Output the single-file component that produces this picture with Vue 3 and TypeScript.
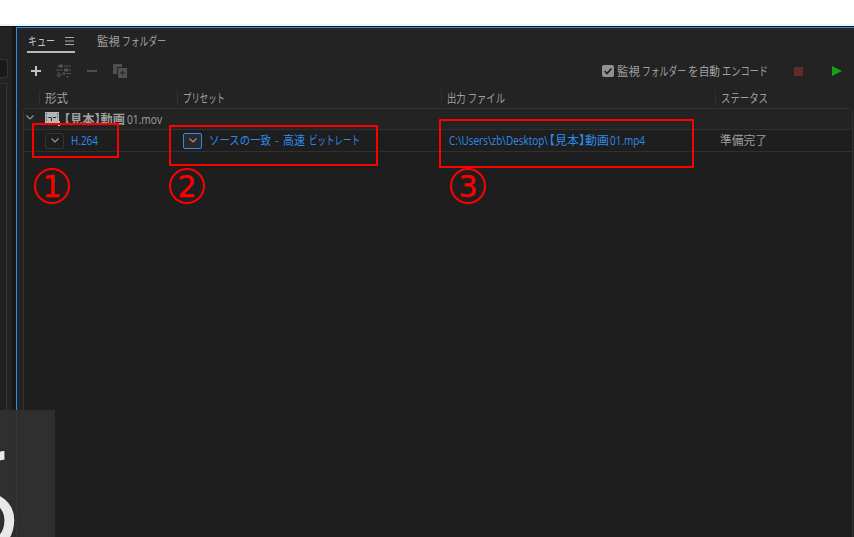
<script setup lang="ts">
import { h, type FunctionalComponent } from 'vue'

interface Column { label: string; width: number; cls: string }

// A single line of text condensed to the width of its slot.
const Fit: FunctionalComponent<{ text: string; w: number }> = (props) =>
  h('svg', { width: props.w, height: 16, viewBox: `0 0 ${props.w} 16`, overflow: 'visible' }, [
    h('text', { x: 0, y: 12.5, textLength: props.w, lengthAdjust: 'spacingAndGlyphs', fill: 'currentColor' }, props.text),
  ])
Fit.props = ['text', 'w']

const columns: Column[] = [
  { label: '形式', width: 23, cls: 'c-format' },
  { label: 'プリセット', width: 42, cls: 'c-preset' },
  { label: '出力 ファイル', width: 58, cls: 'c-output' },
  { label: 'ステータス', width: 47, cls: 'c-status' },
]

const boxes: string[] = ['box-one', 'box-two', 'box-three']
const marks: { n: string; cls: string }[] = [
  { n: '1', cls: 'mark-one' },
  { n: '2', cls: 'mark-two' },
  { n: '3', cls: 'mark-three' },
]
</script>

<template>
  <div class="screen">
    <div class="top-strip"></div>
    <main class="workspace">
      <aside class="side">
        <div class="side-head">
          <div class="side-field"></div>
        </div>
        <div class="side-list"></div>
      </aside>
      <div class="gutter"></div>
      <section class="panel">
        <nav class="tabs">
          <div class="tab active">
            <Fit text="キュー" :w="27" />
            <svg width="9" height="8" viewBox="0 0 9 8"><path d="M0 .5h9M0 4h9M0 7.5h9" stroke="#aaa" /></svg>
          </div>
          <div class="tab words"><Fit text="監視" :w="23" /><Fit text="フォルダー" :w="44" /></div>
        </nav>
        <div class="toolbar">
          <svg class="ico-add" width="10" height="10" viewBox="0 0 10 10"><path d="M5 0v10M0 5h10" stroke="#c4c4c4" stroke-width="2" /></svg>
          <svg class="ico-preset" width="15" height="15" viewBox="0 0 15 15">
            <path d="M1 2h3M8 2h7M0 6h7M12 6h3M10 9.5h5M10 13h3M3 8v6M0 11h6" stroke="#505050" stroke-width="1.2" />
            <path d="M3 .5h4v3H3zM8 4.5h4v3H8zM6 8.5h3v2.5H7.5z" fill="#505050" />
          </svg>
          <svg class="ico-remove" width="10" height="2" viewBox="0 0 10 2"><path d="M0 1h10" stroke="#505050" stroke-width="2" /></svg>
          <svg class="ico-duplicate" width="14" height="14" viewBox="0 0 14 14">
            <path d="M0 0h9v3H4v7H0z" fill="#505050" />
            <path d="M5 4h9v10H5z" fill="#505050" />
            <path d="M9.5 6.5v5M7 9h5" stroke="#232323" />
          </svg>
          <label class="auto">
            <svg width="12" height="12" viewBox="0 0 12 12"><rect width="12" height="12" rx="2" fill="#929292" /><path d="M2.7 6l2.3 2.5 4.5-5" fill="none" stroke="#202020" stroke-width="1.7" /></svg>
            <span class="words"><Fit text="監視" :w="23" /><Fit text="フォルダー" :w="44" /><Fit text="を自動" :w="32" /><Fit text="エンコード" :w="46" /></span>
          </label>
          <div class="stop"></div>
          <svg class="play" width="10" height="10" viewBox="0 0 10 10"><path d="M0 0l10 5-10 5z" fill="#18a018" /></svg>
        </div>
        <header class="columns">
          <div v-for="c in columns" :key="c.label" class="column" :class="c.cls"><Fit :text="c.label" :w="c.width" /></div>
        </header>
        <div class="queue">
          <div class="row source">
            <svg class="chev" width="8" height="5" viewBox="0 0 8 5"><path d="M.5.5L4 4 7.5.5" fill="none" stroke="#999" stroke-width="1.1" /></svg>
            <svg class="film" width="15" height="14" viewBox="0 0 15 14">
              <path d="M0 0h14v9h1v5h-2v-2H0z" fill="#b5b5b5" />
              <path d="M3.5 5.5h3M8 5.5h3M6.5 6v3" fill="none" stroke="#292929" />
              <path d="M1 2h1M1 5h1M1 8h1M12 2h1M12 5h1" stroke="#292929" />
            </svg>
            <div class="t-source"><b><Fit text="【見本】動画" :w="61" /></b><span class="latin"><Fit text="01.mov" :w="35" /></span></div>
          </div>
          <div class="row job">
            <div class="cell j-format">
              <span class="drop"><svg width="8" height="5" viewBox="0 0 8 5"><path d="M.5.5L4 4 7.5.5" fill="none" stroke="#999" stroke-width="1.1" /></svg></span>
              <span class="latin"><Fit text="H.264" :w="27" /></span>
            </div>
            <div class="cell j-preset">
              <span class="drop focus"><svg width="8" height="5" viewBox="0 0 8 5"><path d="M.5.5L4 4 7.5.5" fill="none" stroke="#999" stroke-width="1.1" /></svg></span>
              <span class="t-preset"><Fit text="ソースの一致" :w="62" /><Fit text="-" :w="4" /><Fit text="高速" :w="22" /><Fit text="ビットレート" :w="51" /></span>
            </div>
            <div class="cell j-output">
              <span class="latin"><Fit text="C:\Users\zb\Desktop\" :w="99" /></span>
              <span class="t-name"><Fit text="【見本】動画" :w="60" /></span>
              <span class="latin"><Fit text="01.mp4" :w="35" /></span>
            </div>
            <div class="cell j-status"><Fit text="準備完了" :w="47" /></div>
          </div>
        </div>
      </section>
    </main>
    <div v-for="b in boxes" :key="b" class="box" :class="b"></div>
    <div v-for="m in marks" :key="m.n" class="mark" :class="m.cls">{{ m.n }}</div>
    <div class="caption"><span>ち</span></div>
  </div>
</template>

<style>
body { margin: 0; background: #1e1e1e; overflow: hidden; }
</style>

<style scoped>
* { box-sizing: border-box; }
.screen { position: relative; width: 854px; height: 537px; overflow: hidden; display: flex; flex-direction: column; background: #1e1e1e; color: #a0a0a0; font: 12px/16px "Noto Sans CJK JP", sans-serif; white-space: nowrap; }
svg { display: block; flex: none; }
.top-strip { height: 26px; flex: none; background: #fff; border-bottom: 2px solid #f0f4f2; }
.workspace { flex: 1; display: flex; border-top: 1px solid #101712; }
.side { width: 12px; background: #232323; display: flex; flex-direction: column; }
.side-head { height: 56px; padding-top: 32px; }
.side-field { width: 8px; height: 19px; border: 1px solid #343434; border-left: 0; border-radius: 0 3px 3px 0; background: #191919; }
.side-list { width: 7px; flex: 1; border: 1px solid #343434; border-left: 0; border-bottom: 0; background: #202020; }
.gutter { width: 4px; background: #171717; }
.panel { flex: 1; min-width: 0; display: flex; flex-direction: column; border-left: 1px solid #2d8ceb; border-top: 1px solid #2d8ceb; background: #232323; }
.tabs { height: 25px; display: flex; gap: 22px; padding-left: 10px; }
.tab { height: 25px; display: flex; align-items: center; }
.tab.active { width: 48px; border-bottom: 2px solid #b8b8b8; color: #c4c4c4; justify-content: space-between; padding: 3px 1px 0; }
.words { display: flex; gap: 2px; }
.toolbar { height: 36px; display: flex; align-items: center; padding-left: 14px; }
.ico-preset { margin-left: 15px; }
.ico-remove { margin-left: 16px; }
.ico-duplicate { margin-left: 16px; }
.auto { display: flex; align-items: center; gap: 3px; margin-left: 475px; width: 171px; }
.auto .words { padding-bottom: 1px; }
.stop { width: 9px; height: 9px; margin-left: 21px; background: #642b2b; }
.play { margin-left: 29px; }
.columns { height: 19px; display: flex; padding-left: 22px; }
.column { height: 15px; margin-top: 1px; padding-left: 5px; border-left: 1px solid #303030; }
.c-format { width: 138px; }
.c-preset { width: 264px; }
.c-output { width: 274px; }
.c-status { flex: 1; }
.queue { flex: 1; margin: 0 1px 0 6px; border: 1px solid #323232; border-bottom: 0; border-radius: 4px 4px 0 0; background: #1e1e1e; }
.row { height: 22px; border-bottom: 1px solid #303030; display: flex; align-items: center; }
.row.source { height: 21px; background: #232323; padding-left: 2px; }
.chev { margin-top: -3px; }
.film { margin-left: 11px; }
.t-source { display: flex; gap: 2px; margin-left: 4px; }
.t-source b { font-weight: 700; font-feature-settings: "halt"; }
.latin { font: 12px/16px "Open Sans", sans-serif; }
.cell { display: flex; align-items: center; color: #2d8ceb; }
.drop { width: 19px; height: 16px; border: 1px solid #343434; border-radius: 2px; display: grid; place-items: center; }
.drop.focus { border-color: #2d8ceb; background: #292929; }
.j-format { width: 138px; padding-left: 21px; gap: 7px; }
.j-preset { width: 264px; padding-left: 21px; gap: 7px; }
.t-preset { display: flex; gap: 4px; }
.cell .latin, .t-preset, .t-name { padding-bottom: 1px; }
.j-output { width: 271px; padding-left: 23px; gap: 1px; }
.t-name { font-feature-settings: "halt"; }
.j-status { padding: 0 0 1px 23px; color: #a0a0a0; }
.box { position: absolute; border: 2px solid #ff0000; border-radius: 1px; }
.box-one { left: 32px; top: 123px; width: 87px; height: 35px; }
.box-two { left: 169px; top: 125px; width: 209px; height: 41px; }
.box-three { left: 439px; top: 119px; width: 255px; height: 49px; }
.mark { position: absolute; width: 36px; height: 36px; border: 2px solid #ff0000; border-radius: 50%; color: #ff0000; font: 30px/33px "DejaVu Sans", sans-serif; text-align: center; -webkit-text-stroke: .3px #ff0000; }
.mark-one { left: 34px; top: 168px; }
.mark-two { left: 169px; top: 168px; }
.mark-three { left: 450px; top: 168px; }
.caption { position: absolute; left: 0; top: 410px; width: 55px; height: 127px; overflow: hidden; background: rgba(48, 48, 48, .93); color: #e8e8e8; }
.caption span { position: absolute; right: 17px; top: 3px; font: 400 150px/150px "Noto Sans CJK JP", sans-serif; -webkit-text-stroke: 2.5px #2e2e2e; }
</style>
